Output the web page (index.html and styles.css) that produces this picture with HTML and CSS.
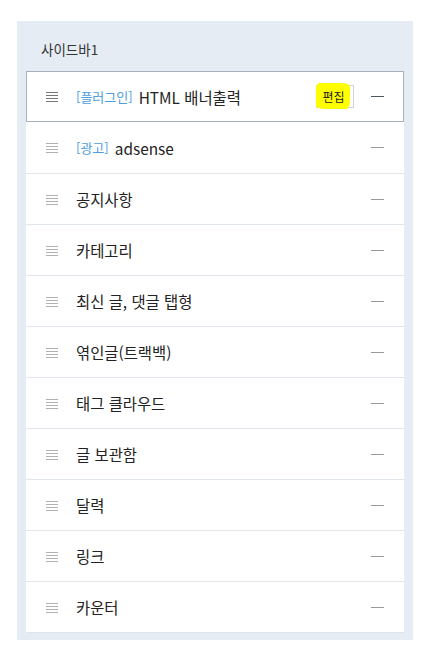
FILE: index.html
```html
<!DOCTYPE html>
<html lang="ko">
<head>
<meta charset="utf-8">
<link rel="stylesheet" href="styles.css">
</head>
<body>
<div class="panel">
  <div class="panel-title">사이드바1</div>
  <ul class="list">
    <li class="item active">
      <span class="handle"><i></i><i></i><i></i><i></i></span>
      <span class="name"><span class="tag">[플러그인]</span>HTML 배너출력</span>
      <span class="edit"><span class="edit-label">편집</span></span>
      <span class="remove"></span>
    </li>
    <li class="item">
      <span class="handle"><i></i><i></i><i></i><i></i></span>
      <span class="name"><span class="tag">[광고]</span>adsense</span>
      <span class="remove"></span>
    </li>
    <li class="item">
      <span class="handle"><i></i><i></i><i></i><i></i></span>
      <span class="name">공지사항</span>
      <span class="remove"></span>
    </li>
    <li class="item">
      <span class="handle"><i></i><i></i><i></i><i></i></span>
      <span class="name">카테고리</span>
      <span class="remove"></span>
    </li>
    <li class="item">
      <span class="handle"><i></i><i></i><i></i><i></i></span>
      <span class="name">최신 글, 댓글 탭형</span>
      <span class="remove"></span>
    </li>
    <li class="item">
      <span class="handle"><i></i><i></i><i></i><i></i></span>
      <span class="name">엮인글(트랙백)</span>
      <span class="remove"></span>
    </li>
    <li class="item">
      <span class="handle"><i></i><i></i><i></i><i></i></span>
      <span class="name">태그 클라우드</span>
      <span class="remove"></span>
    </li>
    <li class="item">
      <span class="handle"><i></i><i></i><i></i><i></i></span>
      <span class="name">글 보관함</span>
      <span class="remove"></span>
    </li>
    <li class="item">
      <span class="handle"><i></i><i></i><i></i><i></i></span>
      <span class="name">달력</span>
      <span class="remove"></span>
    </li>
    <li class="item">
      <span class="handle"><i></i><i></i><i></i><i></i></span>
      <span class="name">링크</span>
      <span class="remove"></span>
    </li>
    <li class="item">
      <span class="handle"><i></i><i></i><i></i><i></i></span>
      <span class="name">카운터</span>
      <span class="remove"></span>
    </li>
  </ul>
</div>
</body>
</html>
```

FILE: styles.css
```css
html, body {
  margin: 0;
  padding: 0;
  background: #ffffff;
}
body {
  font-family: "Noto Sans CJK KR", "Noto Sans", sans-serif;
  color: #222;
  padding: 21px 11px 0 17px;
}
.panel {
  width: 396px;
  height: 619px;
  box-sizing: border-box;
  background: #e5ecf3;
  padding: 0 9px 8px 9px;
}
.panel-title {
  height: 50px;
  box-sizing: border-box;
  padding: 18px 0 0 15px;
  font-size: 13.5px;
  line-height: 20px;
  color: #333;
}
.list {
  list-style: none;
  margin: 0;
  padding: 0;
  background: #fff;
  border-bottom: 1px solid #dfe3ea;
}
.item {
  height: 51px;
  box-sizing: border-box;
  display: flex;
  align-items: center;
  border-top: 1px solid #e1e5ec;
  padding: 0 20px 0 20px;
}
.item:first-child {
  border-top: none;
}
.item.active {
  border: 1px solid #a7afbd;
  padding: 0 19px 0 19px;
}
.list .item.active + .item {
  border-top: none;
}
.handle {
  width: 12px;
  display: flex;
  flex-direction: column;
  gap: 2px;
  margin-right: 18px;
  margin-top: 1px;
}
.handle i {
  display: block;
  height: 1px;
  background: #b0b0b0;
}
.active .handle i {
  background: #777;
}
.name {
  flex: 1;
  font-size: 15.4px;
  line-height: 20px;
  color: #222;
  display: flex;
  align-items: center;
}
.tag {
  font-size: 13px;
  color: #4d9de0;
  margin-right: 6px;
}
.edit {
  position: relative;
  width: 38px;
  height: 23px;
  box-sizing: border-box;
  border: 1px solid #cfd3da;
  background: #fff;
  font-size: 12px;
  line-height: 21px;
  text-align: center;
  color: #222;
  margin-right: 17px;
}
.edit::before {
  content: "";
  position: absolute;
  left: -1px;
  top: -3px;
  width: 34px;
  height: 26px;
  background: #ffff00;
  border-radius: 3px 8px 4px 10px / 6px 4px 8px 3px;
}
.edit-label {
  position: relative;
  font-weight: 400;
  margin-right: 3px;
}
.remove {
  width: 13px;
  height: 1px;
  background: #999;
}
.active .remove {
  background: #4b5565;
}
```
